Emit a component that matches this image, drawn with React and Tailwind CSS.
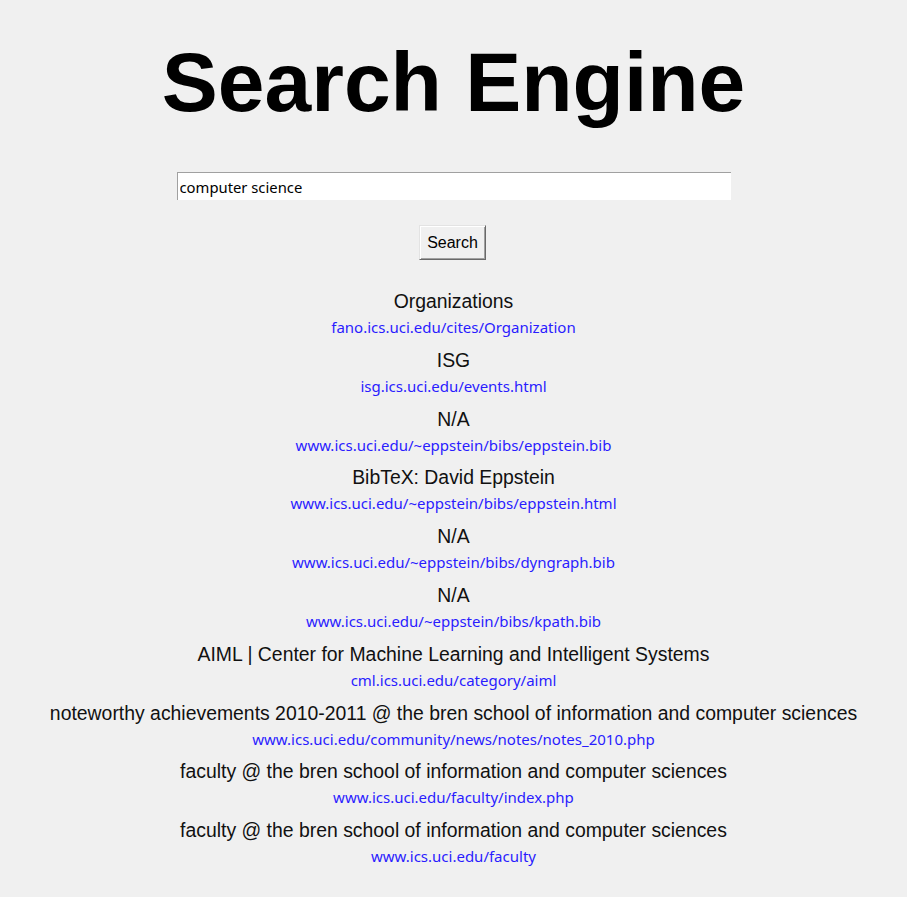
import React from "react";

// Résultats affichés sous la barre de recherche
const results = [
  { title: "Organizations", url: "fano.ics.uci.edu/cites/Organization" },
  { title: "ISG", url: "isg.ics.uci.edu/events.html" },
  { title: "N/A", url: "www.ics.uci.edu/~eppstein/bibs/eppstein.bib" },
  { title: "BibTeX: David Eppstein", url: "www.ics.uci.edu/~eppstein/bibs/eppstein.html" },
  { title: "N/A", url: "www.ics.uci.edu/~eppstein/bibs/dyngraph.bib" },
  { title: "N/A", url: "www.ics.uci.edu/~eppstein/bibs/kpath.bib" },
  { title: "AIML | Center for Machine Learning and Intelligent Systems", url: "cml.ics.uci.edu/category/aiml" },
  {
    title: "noteworthy achievements 2010-2011 @ the bren school of information and computer sciences",
    url: "www.ics.uci.edu/community/news/notes/notes_2010.php",
  },
  { title: "faculty @ the bren school of information and computer sciences", url: "www.ics.uci.edu/faculty/index.php" },
  { title: "faculty @ the bren school of information and computer sciences", url: "www.ics.uci.edu/faculty" },
];

function ResultRow({ title, url }) {
  return (
    <div className="flex flex-col items-center">
      <div className="pt-[5px] text-[19.4px] leading-[24px] text-[#111] font-['Liberation_Sans',Arial,sans-serif] whitespace-nowrap">
        {title}
      </div>
      <div className="text-[15px] leading-[29.8px] text-[#2a1cff] font-['Noto_Sans','Open_Sans',sans-serif] whitespace-nowrap">
        {url}
      </div>
    </div>
  );
}

export default function App() {
  const [query, setQuery] = React.useState("computer science");

  return (
    <div className="min-h-[897px] w-full bg-[#f0f0f0] flex flex-col items-center">
      <h1 className="mt-[40px] text-[84px] leading-none font-bold text-black font-['Liberation_Sans',Arial,sans-serif]">
        Search Engine
      </h1>

      <input
        value={query}
        onChange={(e) => setQuery(e.target.value)}
        className="mt-[48px] w-[554px] h-[28px] bg-white border-t border-l border-[#a0a0a0] border-r-0 border-b-0 px-[2px] text-[14.8px] text-black outline-none font-['Noto_Sans','Open_Sans',sans-serif]"
      />

      <button className="mt-[25px] mr-[2px] w-[67px] h-[35px] bg-[#f0f0f0] border border-t-[#e3e3e3] border-l-[#e3e3e3] border-b-[#696969] border-r-[#696969] shadow-[inset_1px_1px_#ffffff,inset_-1px_-1px_#a0a0a0] text-[16px] text-black font-['Liberation_Sans',Arial,sans-serif]">
        Search
      </button>

      <div className="mt-[24px] flex flex-col items-center">
        {results.map((r, i) => (
          <ResultRow key={i} title={r.title} url={r.url} />
        ))}
      </div>
    </div>
  );
}
